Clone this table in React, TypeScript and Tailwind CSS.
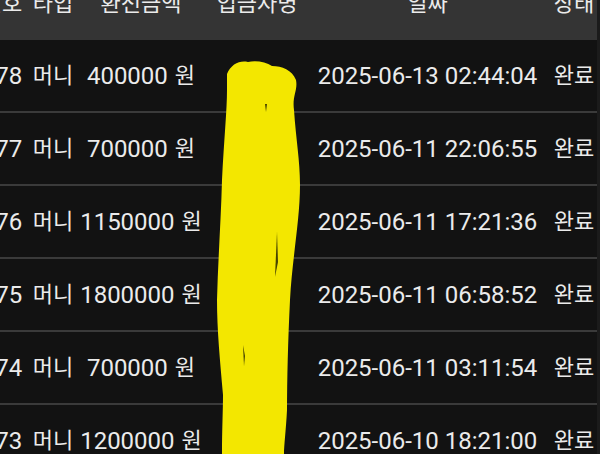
import React from "react";

const rows = [
  { no: "178", amount: "400000", date: "2025-06-13 02:44:04" },
  { no: "177", amount: "700000", date: "2025-06-11 22:06:55" },
  { no: "176", amount: "1150000", date: "2025-06-11 17:21:36" },
  { no: "175", amount: "1800000", date: "2025-06-11 06:58:52" },
  { no: "174", amount: "700000", date: "2025-06-11 03:11:54" },
  { no: "173", amount: "1200000", date: "2025-06-10 18:21:00" },
];

const cols = "grid grid-cols-[64px_38px_138px_94px_247px_46px]";
const cell = "flex items-center justify-center whitespace-nowrap";
const ko = "text-[22px]";

export default function App() {
  return (
    <div
      className="relative w-[600px] h-[454px] overflow-hidden bg-[#1b1b1b] text-[#ebebeb] text-[24px]"
      style={{ fontFamily: 'Roboto, "Noto Sans CJK KR", "Noto Sans", sans-serif' }}
    >
      <div className="-mt-[33px] -ml-[30px] w-[627px]">
        <div className={`${cols} h-[73px] bg-[#343434]`}>
          <div className={`${cell} ${ko}`}>번호</div>
          <div className={`${cell} ${ko}`}>타입</div>
          <div className={`${cell} ${ko}`}>환전금액</div>
          <div className={`${cell} ${ko}`}>입금자명</div>
          <div className={`${cell} ${ko}`}>일짜</div>
          <div className={`${cell} ${ko}`}>상태</div>
        </div>
        {rows.map((r, i) => (
          <div key={i} className={`${cols} h-[73px] bg-[#121212] border-b-2 border-[#3a3a3a]`}>
            <div className={cell}>{r.no}</div>
            <div className={`${cell} ${ko}`}>머니</div>
            <div className={cell}>
              {r.amount}
              <span className={`${ko} ml-[7px]`}>원</span>
            </div>
            <div className={cell}></div>
            <div className={cell}>{r.date}</div>
            <div className={`${cell} ${ko}`}>완료</div>
          </div>
        ))}
      </div>
      <svg className="absolute left-0 top-0" width="600" height="454" viewBox="0 0 600 454">
        <path
          d="M227 74 C231 64 240 60 248 62 C256 60 266 62 272 66 C282 66 292 70 296 80 C298 90 292 96 294 110 C296 140 300 160 300 185 C300 220 292 260 290 300 C288 340 287 380 287 410 C286 430 284 445 284 454 L222 454 C222 430 223 410 223 395 C220 360 217 330 217 300 C218 260 221 220 222 180 C224 140 227 110 227 90 Z"
          fill="#f3e700"
        />
        <path d="M277 232 L278 262 L275 277 Z" fill="#1a1a00" opacity="0.8" />
        <path d="M243 345 L245 356 L244 366 Z" fill="#1a1a00" opacity="0.8" />
        <path d="M265 104 L267 104 L266 112 Z" fill="#1a1a00" opacity="0.8" />
      </svg>
    </div>
  );
}
